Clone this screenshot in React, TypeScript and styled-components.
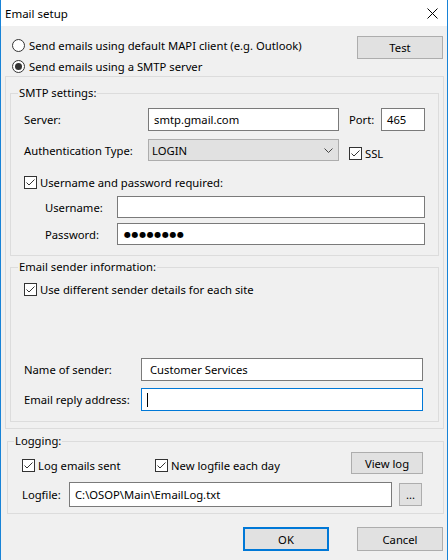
import React from "react";
import styled, { createGlobalStyle } from "styled-components";

const GlobalStyle = createGlobalStyle`
  html, body {
    margin: 0;
    padding: 0;
    background: #f0f0f0;
  }
  body {
    font-family: "Noto Sans", "Open Sans", sans-serif;
    font-size: 11.25px;
    color: #000;
  }
  * {
    box-sizing: border-box;
  }
`;

const Window = styled.div`
  width: 448px;
  height: 560px;
  background: #f0f0f0;
  border-left: 1px solid #1883d7;
  border-right: 1px solid #1883d7;
  display: flex;
  flex-direction: column;
  overflow: hidden;
`;

const TitleBar = styled.div`
  flex: none;
  height: 26px;
  background: #fff;
  display: flex;
  align-items: center;
  justify-content: space-between;
  padding: 0 9px 0 4px;
  font-size: 11.5px;
`;

const TopSection = styled.div`
  flex: none;
  height: 50px;
  display: flex;
  justify-content: space-between;
  padding: 10px 4px 0 11px;
`;

const RadioList = styled.div`
  display: flex;
  flex-direction: column;
  gap: 3px;
`;

const RadioRow = styled.label`
  height: 20px;
  display: flex;
  align-items: center;
  gap: 4px;
`;

const RadioCircle = styled.span`
  width: 13px;
  height: 13px;
  border: 1px solid #333;
  border-radius: 50%;
  background: #fff;
  display: flex;
  align-items: center;
  justify-content: center;
`;

const RadioDot = styled.span`
  width: 7px;
  height: 7px;
  border-radius: 50%;
  background: #333;
`;

const Button = styled.div<{ w: number; h: number; focused?: boolean }>`
  width: ${(p) => p.w}px;
  height: ${(p) => p.h}px;
  flex: none;
  background: #e1e1e1;
  border: ${(p) => (p.focused ? "2px solid #0078d7" : "1px solid #adadad")};
  display: flex;
  align-items: center;
  justify-content: center;
`;

const Panel = styled.div`
  flex: none;
  margin-left: 4px;
  width: 439px;
  border: 1px solid #dcdcdc;
  padding: 16px 4px 6px 4px;
`;

const GroupBox = styled.div<{ pt: number; pl: number; pb: number; pr?: number }>`
  position: relative;
  border: 1px solid #dcdcdc;
  padding: ${(p) => `${p.pt}px ${p.pr ?? 0}px ${p.pb}px ${p.pl}px`};
  display: flex;
  flex-direction: column;
`;

const Legend = styled.span<{ left: number }>`
  position: absolute;
  top: -9px;
  left: ${(p) => p.left}px;
  line-height: 16px;
  padding: 0 1px;
  background: #f0f0f0;
`;

const Row = styled.div<{ mt?: number; indent?: number }>`
  display: flex;
  align-items: center;
  margin-top: ${(p) => p.mt ?? 0}px;
  padding-left: ${(p) => p.indent ?? 0}px;
`;

const Label = styled.span<{ w: number }>`
  width: ${(p) => p.w}px;
  flex: none;
  white-space: nowrap;
`;

const TextBox = styled.div<{ w: number; h: number; focused?: boolean }>`
  width: ${(p) => p.w}px;
  height: ${(p) => p.h}px;
  flex: none;
  background: #fff;
  border: 1px solid ${(p) => (p.focused ? "#0078d7" : "#7a7a7a")};
  padding-left: 5px;
  display: flex;
  align-items: center;
  white-space: nowrap;
  overflow: hidden;
`;

const Dots = styled.span`
  font-family: "DejaVu Sans", sans-serif;
  font-size: 8px;
  letter-spacing: 0.6px;
  margin-left: 1px;
`;

const Caret = styled.span`
  width: 1px;
  height: 14px;
  background: #000;
`;

const Combo = styled.div`
  width: 191px;
  height: 22px;
  flex: none;
  background: #e1e1e1;
  border: 1px solid #adadad;
  padding: 0 5px 0 3px;
  display: flex;
  align-items: center;
  justify-content: space-between;
`;

const CheckItem = styled.label<{ ml?: number; mt?: number; w?: number }>`
  height: 16px;
  display: flex;
  align-items: center;
  gap: 3px;
  margin-left: ${(p) => p.ml ?? 0}px;
  margin-top: ${(p) => p.mt ?? 0}px;
  width: ${(p) => (p.w ? `${p.w}px` : "auto")};
  flex: none;
  white-space: nowrap;
`;

const CheckBox = styled.span`
  width: 13px;
  height: 13px;
  flex: none;
  border: 1px solid #333;
  background: #fff;
  display: flex;
`;

const LogRow = styled.div`
  display: flex;
  align-items: flex-start;
  margin-top: 10px;
  padding-left: 14px;
`;

const Spacer = styled.div`
  flex: 1;
`;

const Footer = styled.div`
  display: flex;
  justify-content: flex-end;
  gap: 28px;
  margin-top: 13px;
  padding-right: 4px;
`;

const Check = () => (
  <CheckBox>
    <svg width="11" height="11" viewBox="0 0 11 11">
      <path d="M1.5 5.5 L4 8 L9.5 2.5" fill="none" stroke="#333" strokeWidth="1" />
    </svg>
  </CheckBox>
);

const Radio: React.FC<{ checked?: boolean; children: React.ReactNode }> = ({ checked, children }) => (
  <RadioRow>
    <RadioCircle>{checked && <RadioDot />}</RadioCircle>
    {children}
  </RadioRow>
);

export default function App() {
  return (
    <>
      <GlobalStyle />
      <Window>
        <TitleBar>
          <span>Email setup</span>
          <svg width="11" height="11" viewBox="0 0 11 11">
            <path d="M0.5 0.5 L10.5 10.5 M10.5 0.5 L0.5 10.5" stroke="#000" strokeWidth="1" />
          </svg>
        </TitleBar>

        <TopSection>
          <RadioList>
            <Radio>Send emails using default MAPI client (e.g. Outlook)</Radio>
            <Radio checked>Send emails using a SMTP server</Radio>
          </RadioList>
          <Button w={86} h={23}>Test</Button>
        </TopSection>

        <Panel>
          <GroupBox pt={14} pl={13} pb={10}>
            <Legend left={7}>SMTP settings:</Legend>
            <Row>
              <Label w={124}>Server:</Label>
              <TextBox w={191} h={23}>smtp.gmail.com</TextBox>
              <Label w={32} style={{ marginLeft: 10 }}>Port:</Label>
              <TextBox w={44} h={23}>465</TextBox>
            </Row>
            <Row mt={8}>
              <Label w={124}>Authentication Type:</Label>
              <Combo>
                <span>LOGIN</span>
                <svg width="9" height="5" viewBox="0 0 9 5">
                  <path d="M0.5 0.5 L4.5 4.5 L8.5 0.5" fill="none" stroke="#444" strokeWidth="1" />
                </svg>
              </Combo>
              <CheckItem ml={10} mt={6}>
                <Check />
                SSL
              </CheckItem>
            </Row>
            <Row mt={13}>
              <CheckItem>
                <Check />
                Username and password required:
              </CheckItem>
            </Row>
            <Row mt={6} indent={21}>
              <Label w={72}>Username:</Label>
              <TextBox w={308} h={22} />
            </Row>
            <Row mt={5} indent={21}>
              <Label w={72}>Password:</Label>
              <TextBox w={308} h={22}>
                <Dots>●●●●●●●●</Dots>
              </TextBox>
            </Row>
          </GroupBox>

          <GroupBox pt={13} pl={13} pb={10} style={{ marginTop: 11 }}>
            <Legend left={7}>Email sender information:</Legend>
            <Row>
              <CheckItem>
                <Check />
                Use different sender details for each site
              </CheckItem>
            </Row>
            <Row mt={61}>
              <Label w={117}>Name of sender:</Label>
              <TextBox w={282} h={23} style={{ paddingLeft: 8 }}>Customer Services</TextBox>
            </Row>
            <Row mt={7}>
              <Label w={117}>Email reply address:</Label>
              <TextBox w={282} h={23} focused>
                <Caret />
              </TextBox>
            </Row>
          </GroupBox>
        </Panel>

        <GroupBox pt={0} pl={0} pb={6} pr={20} style={{ marginLeft: 6, marginTop: 12, width: 437 }}>
          <Legend left={6}>Logging:</Legend>
          <LogRow>
            <CheckItem w={133} mt={5}>
              <Check />
              Log emails sent
            </CheckItem>
            <CheckItem mt={5}>
              <Check />
              New logfile each day
            </CheckItem>
            <Spacer />
            <Button w={72} h={22}>View log</Button>
          </LogRow>
          <Row mt={8} indent={14}>
            <Label w={47}>Logfile:</Label>
            <TextBox w={323} h={25}>C:\OSOP\Main\EmailLog.txt</TextBox>
            <Button w={23} h={23} style={{ marginLeft: 7 }}>...</Button>
          </Row>
        </GroupBox>

        <Footer>
          <Button w={86} h={24} focused>OK</Button>
          <Button w={86} h={24}>Cancel</Button>
        </Footer>
      </Window>
    </>
  );
}
